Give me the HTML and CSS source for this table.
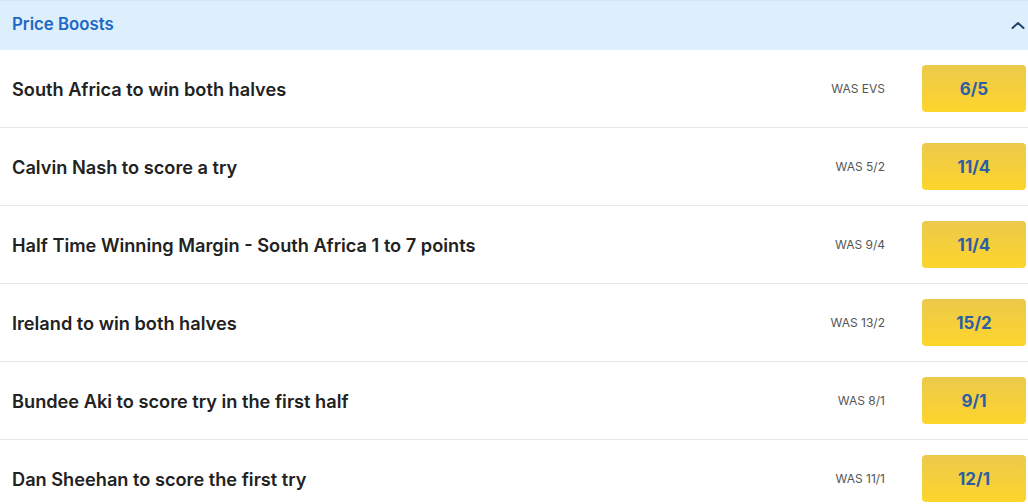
FILE: index.html
```html
<!DOCTYPE html>
<html>
<head>
<meta charset="utf-8">
<link rel="stylesheet" href="styles.css">
</head>
<body>
<div class="panel">
  <div class="header">
    <span class="header-title">Price Boosts</span>
    <svg class="chevron" width="14" height="8" viewBox="0 0 14 8"><path d="M1.5 7 L7 2 L12.5 7" fill="none" stroke="#23446f" stroke-width="2" stroke-linecap="round" stroke-linejoin="round"/></svg>
  </div>
  <div class="row"><span class="label">South Africa to win both halves</span><span class="was">WAS EVS</span><span class="price">6/5</span></div>
  <div class="row"><span class="label">Calvin Nash to score a try</span><span class="was">WAS 5/2</span><span class="price">11/4</span></div>
  <div class="row"><span class="label">Half Time Winning Margin - South Africa 1 to 7 points</span><span class="was">WAS 9/4</span><span class="price">11/4</span></div>
  <div class="row"><span class="label">Ireland to win both halves</span><span class="was">WAS 13/2</span><span class="price">15/2</span></div>
  <div class="row"><span class="label">Bundee Aki to score try in the first half</span><span class="was">WAS 8/1</span><span class="price">9/1</span></div>
  <div class="row"><span class="label">Dan Sheehan to score the first try</span><span class="was">WAS 11/1</span><span class="price">12/1</span></div>
</div>
</body>
</html>
```
FILE: styles.css
```css
html, body {
  margin: 0;
  padding: 0;
  background: #ffffff;
  font-family: Inter, "Noto Sans", sans-serif;
}
.panel {
  width: 1028px;
}
.header {
  height: 50px;
  border-top: 1px solid #d6e4f2;
  background: #ddeefc;
  display: flex;
  align-items: center;
  justify-content: space-between;
  padding: 0 2px 3px 12px;
  box-sizing: border-box;
}
.header-title {
  font-size: 16.8px;
  font-weight: 600;
  color: #1d68c4;
}
.chevron {
  margin-right: 1px;
  margin-top: 2px;
}
.row {
  display: flex;
  align-items: center;
  height: 78px;
  box-sizing: border-box;
  border-bottom: 1px solid #e6e6e6;
  padding: 0 2px 0 12px;
}
.label {
  flex: 1;
  font-size: 18.2px;
  font-weight: 600;
  color: #222222;
}
.was {
  font-size: 12px;
  color: #555555;
  margin-right: 37px;
}
.price {
  width: 104px;
  height: 47px;
  border-radius: 4px;
  background: linear-gradient(#ecc94c, #fdd52b);
  display: flex;
  align-items: center;
  justify-content: center;
  font-size: 17px;
  font-weight: 700;
  color: #2c5ea6;
}
```
